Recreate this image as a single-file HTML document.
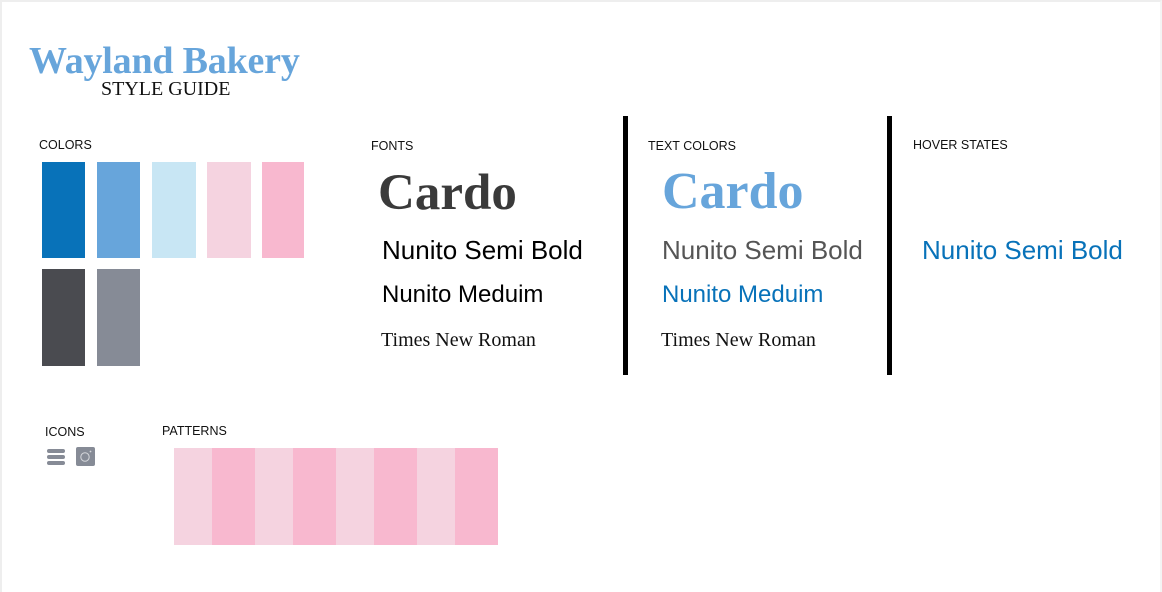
<!DOCTYPE html>
<html><head><meta charset="utf-8"><style>
*{margin:0;padding:0;box-sizing:border-box}
body{width:1162px;height:592px;background:#fff;position:relative;overflow:hidden;font-family:"Liberation Sans",sans-serif}
.frame{position:absolute;left:0;top:0;width:1162px;height:592px;border-top:2px solid #eee;border-left:2px solid #eee;border-right:2px solid #f4f4f4}
.a{position:absolute;white-space:nowrap}
.lbl{font-size:12.5px;color:#111}
.sw{position:absolute}
.serif{font-family:"Liberation Serif",serif}
.vl{position:absolute;width:5px;background:#000;top:116px;height:259px}
</style></head><body>
<div class="frame"></div>
<div class="a serif" style="left:29px;top:39px;font-size:38px;color:#67a5db;font-weight:bold;letter-spacing:-0.2px">Wayland Bakery</div>
<div class="a serif" style="left:101px;top:78px;font-size:20px;color:#111">STYLE GUIDE</div>

<div class="a lbl" style="left:39px;top:138px">COLORS</div>
<div class="sw" style="left:42px;top:162px;width:43px;height:96px;background:#0872b9"></div>
<div class="sw" style="left:97px;top:162px;width:43px;height:96px;background:#67a5db"></div>
<div class="sw" style="left:152px;top:162px;width:44px;height:96px;background:#c8e6f4"></div>
<div class="sw" style="left:207px;top:162px;width:44px;height:96px;background:#f5d3e0"></div>
<div class="sw" style="left:262px;top:162px;width:42px;height:96px;background:#f8b8cf"></div>
<div class="sw" style="left:42px;top:269px;width:43px;height:97px;background:#4a4b50"></div>
<div class="sw" style="left:97px;top:269px;width:43px;height:97px;background:#868b96"></div>

<div class="a lbl" style="left:371px;top:139px">FONTS</div>
<div class="a serif" style="left:378px;top:164px;font-size:51px;font-weight:bold;color:#3a3a3a">Cardo</div>
<div class="a" style="left:382px;top:235px;font-size:26px;color:#000">Nunito Semi Bold</div>
<div class="a" style="left:382px;top:281px;font-size:24px;color:#000">Nunito Meduim</div>
<div class="a serif" style="left:381px;top:329px;font-size:20px;color:#111">Times New Roman</div>

<div class="vl" style="left:623px"></div>

<div class="a lbl" style="left:648px;top:139px">TEXT COLORS</div>
<div class="a serif" style="left:662px;top:162px;font-size:52px;font-weight:bold;color:#67a5db">Cardo</div>
<div class="a" style="left:662px;top:235px;font-size:26px;color:#555">Nunito Semi Bold</div>
<div class="a" style="left:662px;top:281px;font-size:24px;color:#0872b9">Nunito Meduim</div>
<div class="a serif" style="left:661px;top:329px;font-size:20px;color:#111">Times New Roman</div>

<div class="vl" style="left:887px"></div>

<div class="a lbl" style="left:913px;top:138px">HOVER STATES</div>
<div class="a" style="left:922px;top:235px;font-size:26px;color:#0872b9">Nunito Semi Bold</div>

<div class="a lbl" style="left:45px;top:425px">ICONS</div>
<div class="sw" style="left:47px;top:449px;width:18px;height:4px;background:#868b96;border-radius:2px"></div>
<div class="sw" style="left:47px;top:455px;width:18px;height:4px;background:#868b96;border-radius:2px"></div>
<div class="sw" style="left:47px;top:461px;width:18px;height:4px;background:#868b96;border-radius:2px"></div>
<svg class="sw" style="left:76px;top:447px" width="19" height="19" viewBox="0 0 19 19"><rect width="19" height="19" rx="2" fill="#868b96"/><circle cx="9" cy="10" r="4.2" fill="none" stroke="#d6d8dc" stroke-width="1"/><circle cx="14.5" cy="4.5" r="0.9" fill="#d6d8dc"/></svg>

<div class="a lbl" style="left:162px;top:424px">PATTERNS</div>
<div class="sw" style="left:174px;top:448px;width:38px;height:97px;background:#f5d3e0"></div>
<div class="sw" style="left:212px;top:448px;width:43px;height:97px;background:#f8b8cf"></div>
<div class="sw" style="left:255px;top:448px;width:38px;height:97px;background:#f5d3e0"></div>
<div class="sw" style="left:293px;top:448px;width:43px;height:97px;background:#f8b8cf"></div>
<div class="sw" style="left:336px;top:448px;width:38px;height:97px;background:#f5d3e0"></div>
<div class="sw" style="left:374px;top:448px;width:43px;height:97px;background:#f8b8cf"></div>
<div class="sw" style="left:417px;top:448px;width:38px;height:97px;background:#f5d3e0"></div>
<div class="sw" style="left:455px;top:448px;width:43px;height:97px;background:#f8b8cf"></div>
</body></html>
